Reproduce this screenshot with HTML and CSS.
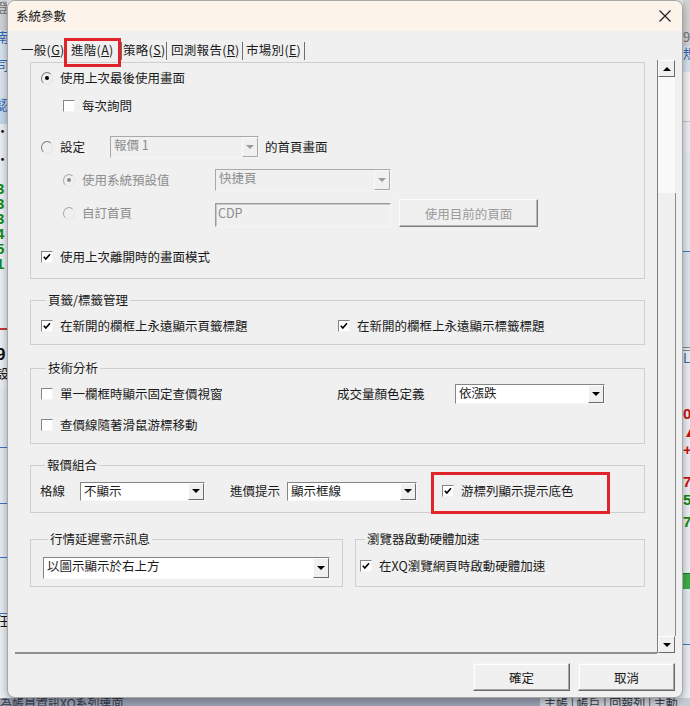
FILE: index.html
```html
<!DOCTYPE html>
<html lang="zh-Hant">
<head>
<meta charset="utf-8">
<title>系統參數</title>
<link rel="stylesheet" href="styles.css">
</head>
<body>
<div class="desk">
  <div class="bg">
    <div class="side side-left">
      <div class="s r30 c-gray">登</div>
      <div class="s r28 c-blue bgb1">南</div>
      <div class="s r40 c-blue bgb2">司</div>
      <div class="s r26 c-blue bgb3">認</div>
      <div class="s r28 c-black">·</div>
      <div class="s r30 c-black">·</div>
      <div class="s r15 c-green b">3</div>
      <div class="s r15 c-green b">3</div>
      <div class="s r15 c-green b">3</div>
      <div class="s r15 c-green b">4</div>
      <div class="s r15 c-green b">5</div>
      <div class="s r15 c-green b">1</div>
      <div class="s r20 c-black">:</div>
      <div class="s r20 c-black">.</div>
      <div class="s r16"></div>
      <div class="s redline"></div>
      <div class="s r14"></div>
      <div class="s r22 c-black b big">9</div>
      <div class="s r22 c-black">設</div>
      <div class="s r60 rowline"></div>
      <div class="s r56 rowline"></div>
      <div class="s r54 rowline"></div>
      <div class="s r56 rowline"></div>
      <div class="s r30 c-black">任</div>
    </div>
    <div class="side side-right">
      <div class="s r30 bgg"></div>
      <div class="s r16 c-gray">9</div>
      <div class="s r26 c-blue bgb1">規</div>
      <div class="s r50 rowline2"></div>
      <div class="s r30"></div>
      <div class="s r100 bgb2 rowline"></div>
      <div class="s r95 bgb2"></div>
      <div class="s dbl"></div>
      <div class="s r16 c-blue">L</div>
      <div class="s r40"></div>
      <div class="s r18 c-red b">0</div>
      <div class="s r18 c-red b">▲</div>
      <div class="s r18 c-red b">+</div>
      <div class="s r14"></div>
      <div class="s r18 c-red b">7</div>
      <div class="s r22 c-green b">5</div>
      <div class="s r22 c-green b">7</div>
      <div class="s r36"></div>
      <div class="s gbar"></div>
      <div class="s r56 rowline"></div>
    </div>
  </div>
  <div class="bg-bottom">
    <span class="bt-left">為帳員資訊XQ系列連面</span>
    <span class="bt-right">主帳 | 帳戶 | 回報列 | 主動</span>
  </div>

  <div class="dialog">
    <div class="titlebar">
      <span class="title">系統參數</span>
      <svg class="close" width="12" height="12" viewBox="0 0 12 12"><path d="M0.5 0.5 L11.5 11.5 M11.5 0.5 L0.5 11.5" stroke="#1f1f1f" stroke-width="1.2" fill="none"/></svg>
    </div>

    <div class="tabs">
      <span class="tab t1">一般(<u>G</u>)</span>
      <span class="tab t2">進階(<u>A</u>)</span>
      <span class="tab t3">策略(<u>S</u>)</span>
      <span class="tab t4">回測報告(<u>R</u>)</span>
      <span class="tab t5">市場別(<u>E</u>)</span>
    </div>

    <div class="body">
      <div class="scrollarea">
        <div class="groups">
          <div class="box g1">
            <div class="row r1"><span class="radio on"></span><span class="txt">使用上次最後使用畫面</span></div>
            <div class="row r2 indent"><span class="cb"></span><span class="txt">每次詢問</span></div>
            <div class="row r3"><span class="radio"></span><span class="txt w-set">設定</span>
              <span class="combo dis w149"><span class="ctext">報價 1</span><span class="cbtn"><span class="tri"></span></span></span>
              <span class="txt after">的首頁畫面</span></div>
            <div class="row r4 indent"><span class="radio on dis"></span><span class="txt gray w-sub">使用系統預設值</span>
              <span class="combo dis w176"><span class="ctext">快捷頁</span><span class="cbtn"><span class="tri"></span></span></span></div>
            <div class="row r5 indent"><span class="radio dis"></span><span class="txt gray w-sub">自訂首頁</span>
              <span class="field">CDP</span>
              <span class="btn dis">使用目前的頁面</span></div>
            <div class="row r6"><span class="cb on"><svg width="10" height="10" viewBox="0 0 10 10"><path d="M1.8 4.8 L3.8 7 L8 2.2" stroke="#000" stroke-width="1.6" fill="none"/></svg></span><span class="txt">使用上次離開時的畫面模式</span></div>
          </div>

          <fieldset class="grp g2">
            <legend>頁籤/標籤管理</legend>
            <div class="row rr">
              <span class="cell c297"><span class="cb on"><svg width="10" height="10" viewBox="0 0 10 10"><path d="M1.8 4.8 L3.8 7 L8 2.2" stroke="#000" stroke-width="1.6" fill="none"/></svg></span><span class="txt">在新開的欄框上永遠顯示頁籤標題</span></span>
              <span class="cb on"><svg width="10" height="10" viewBox="0 0 10 10"><path d="M1.8 4.8 L3.8 7 L8 2.2" stroke="#000" stroke-width="1.6" fill="none"/></svg></span><span class="txt">在新開的欄框上永遠顯示標籤標題</span>
            </div>
          </fieldset>

          <fieldset class="grp g3">
            <legend>技術分析</legend>
            <div class="row rr">
              <span class="cell c296"><span class="cb"></span><span class="txt">單一欄框時顯示固定查價視窗</span></span>
              <span class="txt w118">成交量顏色定義</span>
              <span class="combo w150 h20"><span class="ctext">依漲跌</span><span class="cbtn"><span class="tri"></span></span></span>
            </div>
            <div class="row rr2">
              <span class="cb"></span><span class="txt">查價線隨著滑鼠游標移動</span>
            </div>
          </fieldset>

          <fieldset class="grp g4">
            <legend>報價組合</legend>
            <div class="row rq">
              <span class="txt">格線</span>
              <span class="combo w125 h19 ml15"><span class="ctext">不顯示</span><span class="cbtn"><span class="tri"></span></span></span>
              <span class="txt ml25">進價提示</span>
              <span class="combo w130 h19 ml7"><span class="ctext">顯示框線</span><span class="cbtn"><span class="tri"></span></span></span>
              <span class="cb on ml25"><svg width="10" height="10" viewBox="0 0 10 10"><path d="M1.8 4.8 L3.8 7 L8 2.2" stroke="#000" stroke-width="1.6" fill="none"/></svg></span><span class="txt">游標列顯示提示底色</span>
            </div>
          </fieldset>

          <div class="pair">
            <fieldset class="grp g5">
              <legend>行情延遲警示訊息</legend>
              <span class="combo w287 h22 mt10"><span class="ctext">以圖示顯示於右上方</span><span class="cbtn"><span class="tri"></span></span></span>
            </fieldset>
            <fieldset class="grp g6">
              <legend>瀏覽器啟動硬體加速</legend>
              <div class="row rh">
                <span class="cb on"><svg width="10" height="10" viewBox="0 0 10 10"><path d="M1.8 4.8 L3.8 7 L8 2.2" stroke="#000" stroke-width="1.6" fill="none"/></svg></span><span class="txt">在XQ瀏覽網頁時啟動硬體加速</span>
              </div>
            </fieldset>
          </div>
        </div>
      </div>
      <div class="scrollbar">
        <span class="sbtn"><span class="tri up"></span></span>
        <span class="thumb"></span>
        <span class="track"></span>
        <span class="sbtn"><span class="tri"></span></span>
      </div>
    </div>

    <div class="footer">
      <button class="pbtn">確定</button>
      <button class="pbtn">取消</button>
    </div>

    <div class="annot a-tab"></div>
    <div class="annot a-cb"></div>
  </div>
</div>
</body>
</html>
```

FILE: styles.css
```css
* { box-sizing: border-box; }
html, body { margin: 0; padding: 0; }
body {
  width: 690px; height: 706px; overflow: hidden;
  font-family: "Noto Sans CJK TC", "Noto Sans", sans-serif;
  font-size: 12.5px; color: #1a1a1a;
  background: #e4ebf2;
}
.desk { position: relative; width: 690px; height: 706px; overflow: hidden; }

/* background application strips */
.bg { display: flex; justify-content: space-between; height: 698px; }
.side { width: 7px; overflow: hidden; display: flex; flex-direction: column; background: #edf1f5; }
.side-left .s { text-indent: -4px; }
.s { font-size: 13px; line-height: 14px; white-space: nowrap; overflow: hidden; flex: none; }
.b { font-weight: bold; font-family: "Liberation Sans", sans-serif; font-size: 15px; }
.big { font-size: 17px; line-height: 22px; }
.r14 { height: 14px; } .r15 { height: 15px; } .r16 { height: 16px; } .r18 { height: 18px; }
.r20 { height: 20px; } .r22 { height: 22px; } .r26 { height: 26px; } .r28 { height: 28px; }
.r30 { height: 30px; } .r36 { height: 36px; } .r40 { height: 40px; } .r50 { height: 50px; }
.r54 { height: 54px; } .r56 { height: 56px; } .r60 { height: 60px; } .r95 { height: 95px; } .r100 { height: 100px; }
.c-gray { color: #6f6f6f; background: #d3d5d8; }
.c-blue { color: #2c69b3; }
.c-black { color: #111; }
.c-green { color: #138a13; }
.c-red { color: #d01010; }
.bgb1 { background: #d9e5f1; }
.bgb2 { background: #dfe8f2; }
.bgb3 { background: #c6d9ee; }
.bgg { background: #d4d4d4; }
.redline { height: 2px; background: #c23a3a; }
.dbl { height: 4px; border-top: 1px solid #8a8a8a; border-bottom: 1px solid #8a8a8a; }
.rowline { border-bottom: 1px solid #3b77c0; background: #e6edf5; }
.rowline2 { border-bottom: 1px solid #c6c6c6; background: #f2f4f6; }
.gbar { height: 16px; background: #3bb24a; border-top: 1px solid #1d7a28; }
.bg-bottom {
  height: 8px; background: #9ba2b3; overflow: hidden;
  display: flex; justify-content: space-between;
  font-size: 12px; line-height: 10px; color: #333a4a;
}
.bt-left { padding-left: 0; }
.bt-right { background: #c9ccd4; padding: 0 4px; width: 150px; }

/* dialog */
.dialog {
  position: absolute; left: 7px; top: 0;
  width: 676px; height: 698px;
  background: #f0f0f0;
  border: 1px solid #a8a8a8;
  border-radius: 8px;
  box-shadow: 0 2px 10px rgba(0,0,0,0.35);
  overflow: hidden;
  display: flex; flex-direction: column;
}
.titlebar {
  height: 30px; flex: none;
  background: #fcf4ea;
  display: flex; align-items: center; justify-content: space-between;
  padding: 0 11px 0 8px;
}
.title { font-size: 12.5px; line-height: 16px; color: #1a1a1a; }
.close { display: block; }

.tabs {
  height: 29px; flex: none;
  display: flex; align-items: flex-start;
  padding: 11px 0 0 12px;
}
.tab {
  flex: none;
  line-height: 16px; height: 18px; white-space: nowrap;
  border-right: 1px solid #6e6e6e;
  letter-spacing: 0.3px;
}
.tab u { text-underline-offset: 1px; }
.t1 { width: 45px; padding-left: 1px; }
.t2 { width: 57px; padding-left: 6px; }
.t3 { width: 45px; padding-left: 1px; }
.t4 { width: 76px; padding-left: 4px; }
.t5 { width: 62px; padding-left: 3px; }

.body { height: 594px; flex: none; display: flex; }
.scrollarea {
  margin-left: 7px; width: 642px; height: 594px;
  padding: 2px 0 0 15px;
  border-bottom: 2px solid #8f8f8f;
  overflow: hidden;
}
.groups { width: 615px; }

.box, .grp { border: 1px solid #cfcfcf; }
.grp { margin: 0; padding: 0; min-width: 0; }
.grp legend {
  margin-left: 5px; padding: 0 2px;
  line-height: 16px; font-size: 12.5px;
}

.row { display: flex; align-items: center; white-space: nowrap; }
.txt { line-height: 16px; }
.gray { color: #8d8d8d; }

/* group 1 */
.g1 { padding: 0 0 11px 10px; }
.g1 .r1 { margin-top: 5px; height: 20px; }
.g1 .r2 { margin-top: 8px; height: 20px; }
.g1 .r3 { margin-top: 20px; height: 22px; }
.g1 .r4 { margin-top: 11px; height: 22px; }
.g1 .r5 { margin-top: 8px; height: 28px; }
.g1 .r6 { margin-top: 20px; height: 20px; }
.indent { padding-left: 22px; }
.w-set { width: 50px; }
.w-sub { width: 133px; }
.after { margin-left: 6px; }

.g2 { margin-top: 13px; padding: 0 0 8px 10px; }
.rr { margin-top: 8px; height: 20px; }
.c297 { width: 297px; display: flex; align-items: center; }
.c296 { width: 296px; display: flex; align-items: center; }
.w118 { width: 118px; }
.g3 { margin-top: 15px; padding: 0 0 8px 10px; }
.rr2 { margin-top: 11px; height: 20px; }
.g4 { margin-top: 13px; padding: 0 0 11px 9px; }
.rq { margin-top: 8px; height: 20px; }
.ml7 { margin-left: 7px; } .ml15 { margin-left: 15px; } .ml25 { margin-left: 25px; }
.mt10 { margin-top: 10px; }

.pair { display: flex; gap: 12px; margin-top: 18px; }
.g5 { width: 313px; padding: 0 0 7px 12px; }
.g6 { width: 290px; padding: 0 0 7px 4px; }
.rh { margin-top: 9px; height: 20px; }

/* controls */
.radio {
  flex: none; width: 12px; height: 12px; margin-right: 7px;
  display: flex; align-items: center; justify-content: center;
  position: relative;
}
.radio::before {
  content: ""; width: 11px; height: 11px; border-radius: 50%;
  border: 1px solid; border-color: #7b7b7b #e2e2e2 #e2e2e2 #7b7b7b;
  background: transparent;
}
.radio.on::after {
  content: ""; position: absolute; left: 4px; top: 4px;
  width: 4px; height: 4px; border-radius: 50%; background: #000;
}
.radio.dis::before { border-color: #a8a8a8 #e6e6e6 #e6e6e6 #a8a8a8; }
.radio.dis.on::after { background: #8a8a8a; }

.cb {
  flex: none; width: 12px; height: 12px; margin-right: 7px;
  background: #fff;
  border: 1px solid; border-color: #858585 #f4f4f4 #f4f4f4 #858585;
  display: flex; align-items: center; justify-content: center;
}
.cb svg { display: block; }

.combo {
  flex: none; display: flex; height: 22px;
  background: #fff;
  border: 1px solid; border-color: #858585 #f8f8f8 #f8f8f8 #858585;
}
.h19 { height: 19px; } .h20 { height: 20px; } .h22 { height: 22px; }
.w125 { width: 125px; } .w130 { width: 130px; } .w149 { width: 149px; }
.w150 { width: 150px; } .w176 { width: 176px; } .w287 { width: 287px; }
.ctext { flex: 1; padding: 0 3px; line-height: 16px; overflow: hidden; }
.cbtn {
  flex: none; width: 16px;
  background: #f0f0f0;
  border: 1px solid; border-color: #ffffff #6c6c6c #6c6c6c #ffffff;
  display: flex; align-items: center; justify-content: center;
}
.tri {
  width: 0; height: 0;
  border-left: 4px solid transparent; border-right: 4px solid transparent;
  border-top: 4px solid #000;
}
.tri.up { border-top: 0; border-bottom: 4px solid #000; }
.combo.dis { background: #f0f0f0; border-color: #a9a9a9 #f6f6f6 #f6f6f6 #a9a9a9; color: #8d8d8d; }
.combo.dis .cbtn { border-color: #fafafa #a9a9a9 #a9a9a9 #fafafa; }
.combo.dis .tri { border-top-color: #9a9a9a; }

.field {
  flex: none; align-self: flex-end;
  width: 176px; height: 24px;
  border: 1px solid; border-color: #9a9a9a #f6f6f6 #f6f6f6 #9a9a9a;
  box-shadow: inset 1px 1px 0 #c9c9c9;
  padding: 1px 2px; line-height: 16px; color: #8d8d8d; background: #f0f0f0;
}
.btn {
  flex: none; margin-left: 8px;
  width: 139px; height: 28px;
  display: flex; align-items: center; justify-content: center;
  border: 1px solid; border-color: #fcfcfc #7a7a7a #7a7a7a #fcfcfc;
  box-shadow: inset -1px -1px 0 #b9b9b9;
  background: #f0f0f0; color: #9a9a9a;
}

/* scrollbar */
.scrollbar {
  width: 19px; height: 593px; flex: none;
  border-left: 1px solid #7c7c7c;
  display: flex; flex-direction: column;
}
.sbtn {
  flex: none; width: 17px; height: 17px;
  background: #f0f0f0;
  border: 1px solid; border-color: #fdfdfd #6a6a6a #6a6a6a #fdfdfd;
  display: flex; align-items: center; justify-content: center;
}
.thumb { flex: none; height: 116px; width: 17px; background: #f9f9f9; }
.track { flex: 1; width: 18px; border-right: 1px solid #8a8a8a; background: #f0f0f0; }

/* footer */
.footer {
  flex: 1;
  display: flex; justify-content: flex-end; align-items: flex-start;
  gap: 8px; padding: 9px 7px 0 0;
}
.pbtn {
  width: 97px; height: 28px;
  font: inherit; font-size: 12.5px; color: #1a1a1a;
  background: #f0f0f0;
  border: 1px solid; border-color: #f4f4f4 #6a6a6a #6a6a6a #f4f4f4;
  box-shadow: inset -1px -1px 0 #a6a6a6, inset 1px 1px 0 #ffffff;
  padding: 0;
}

/* red annotation boxes */
.annot { position: absolute; border: 3px solid #e0242a; pointer-events: none; }
.a-tab { left: 56px; top: 37px; width: 57px; height: 29px; }
.a-cb { left: 423px; top: 471px; width: 179px; height: 42px; }
```
